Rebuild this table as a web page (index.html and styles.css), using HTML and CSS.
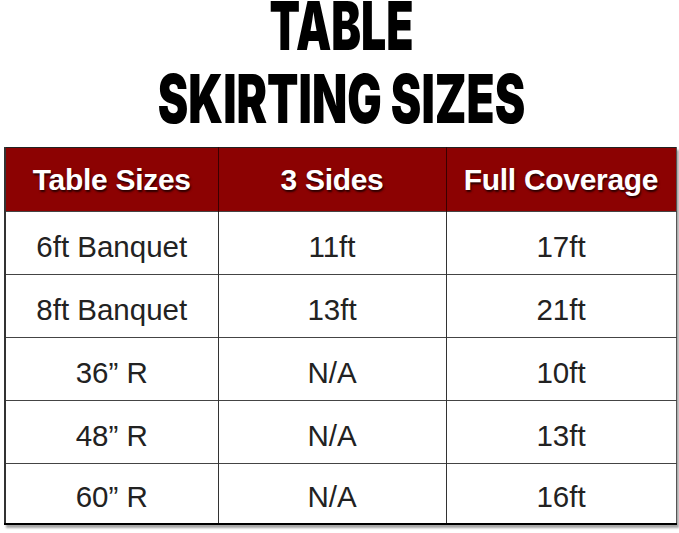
FILE: index.html
```html
<!DOCTYPE html>
<html>
<head>
<meta charset="utf-8">
<link rel="stylesheet" href="styles.css">
</head>
<body>
<div class="page">
  <h1 class="title">
    <span class="line line1">TABLE</span>
    <span class="line line2">SKIRTING SIZES</span>
  </h1>
  <table class="sizes">
    <colgroup>
      <col class="c1"><col class="c2"><col class="c3">
    </colgroup>
    <thead>
      <tr><th>Table Sizes</th><th>3 Sides</th><th>Full Coverage</th></tr>
    </thead>
    <tbody>
      <tr><td>6ft Banquet</td><td>11ft</td><td>17ft</td></tr>
      <tr><td>8ft Banquet</td><td>13ft</td><td>21ft</td></tr>
      <tr><td>36” R</td><td>N/A</td><td>10ft</td></tr>
      <tr><td>48” R</td><td>N/A</td><td>13ft</td></tr>
      <tr class="last"><td>60” R</td><td>N/A</td><td>16ft</td></tr>
    </tbody>
  </table>
</div>
</body>
</html>
```

FILE: styles.css
```css
html, body {
  margin: 0;
  padding: 0;
  background: #ffffff;
}

.page {
  width: 679px;
  height: 533px;
  overflow: hidden;
  padding-left: 4px;
  box-sizing: border-box;
}

.title {
  margin: 0 0 12px 0;
  padding: 0;
  font-family: "Inter", "Liberation Sans", sans-serif;
  font-weight: 900;
  font-size: 67px;
  color: #000;
  text-align: center;
}

.line {
  display: block;
  white-space: nowrap;
}

.line1 {
  line-height: 51px;
  transform: scaleX(0.665);
}

.line2 {
  margin-top: 11px;
  line-height: 73px;
  transform: scaleX(0.684);
}

.sizes {
  width: 671px;
  border-collapse: collapse;
  table-layout: fixed;
  font-family: "Liberation Sans", Arial, sans-serif;
  box-shadow: 2px 3px 2px rgba(0, 0, 0, 0.35);
  border-left: 2px solid #333;
  border-right: 1px solid #555;
  border-top: 1px solid #222;
  border-bottom: 2px solid #000;
}

.c1 { width: 213px; }
.c2 { width: 228px; }
.c3 { width: 230px; }

.sizes th {
  background: #8c0202;
  color: #fff;
  font-weight: 700;
  font-size: 30px;
  height: 63px;
  padding: 0;
  text-align: center;
  vertical-align: middle;
  text-shadow: 1px 2px 2px rgba(0, 0, 0, 0.7);
  border-left: 1px solid #3a0000;
  letter-spacing: -0.3px;
}

.sizes th:first-child {
  border-left: none;
}

.sizes td {
  height: 63px;
  padding: 8px 0 0 0;
  box-sizing: border-box;
  font-size: 29.5px;
  font-weight: 400;
  color: #222;
  text-align: center;
  vertical-align: middle;
  border-top: 1px solid #444;
  border-left: 1.5px solid #333;
}

.sizes td:first-child {
  border-left: none;
}

.sizes tr.last td {
  height: 60px;
}
```
